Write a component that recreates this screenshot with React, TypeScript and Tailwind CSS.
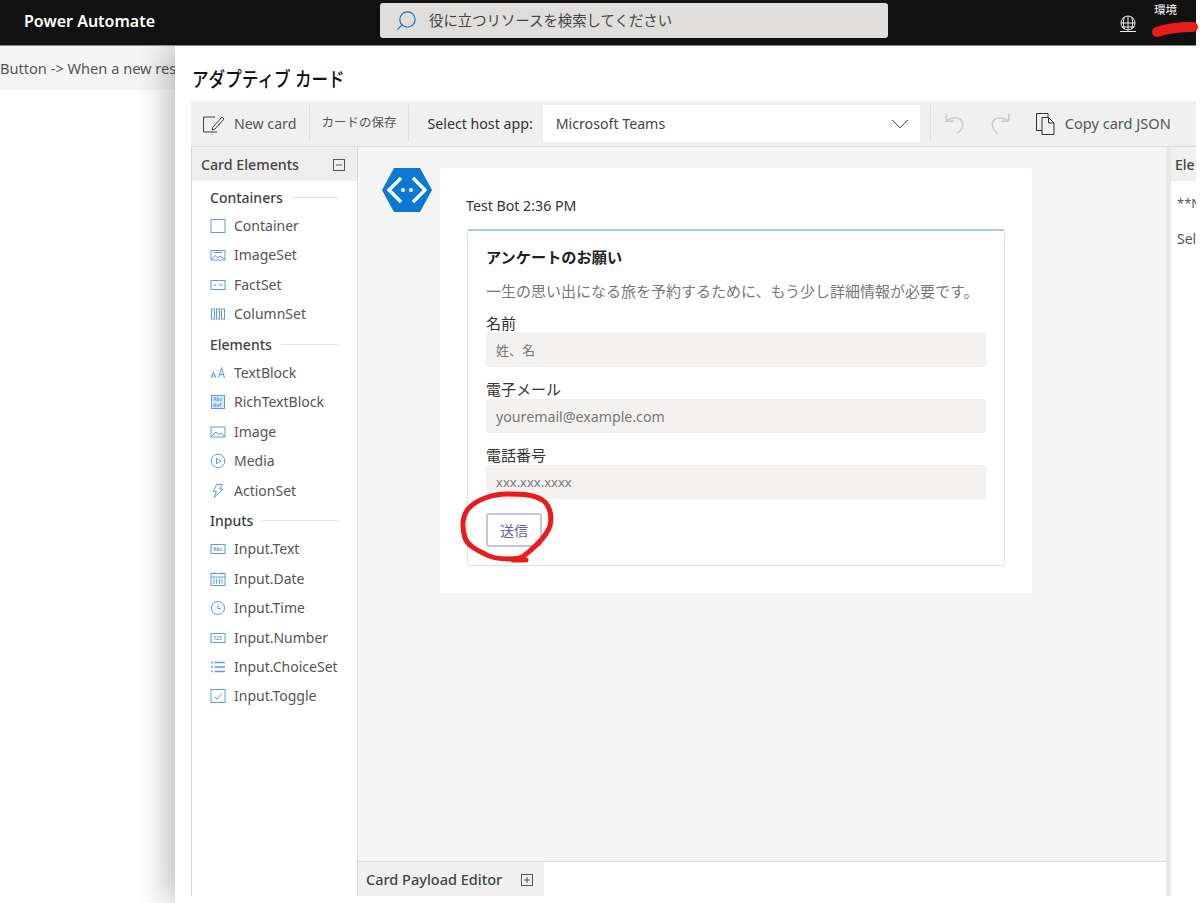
import { ReactNode } from "react"
import { ChevronDown, Search } from "lucide-react"

const sans = "font-['Noto_Sans','Noto_Sans_CJK_JP',sans-serif]"

function Ico({ children }: { children: ReactNode }) {
  return (
    <svg viewBox="0 0 16 16" fill="none" stroke="#5b9be6" strokeWidth="1" className="h-4 w-4 shrink-0">
      {children}
    </svg>
  )
}

function Tiny({ x, y, size = 5, children }: { x: number; y: number; size?: number; children: string }) {
  return (
    <text x={x} y={y} fontSize={size} fontWeight="700" fill="#5b9be6" stroke="none">
      {children}
    </text>
  )
}

const icons: Record<string, ReactNode> = {
  Container: <rect x="1" y="1.5" width="14" height="13" />,
  ImageSet: (
    <>
      <path d="M1 3.5h14v9.5H1z" />
      <path d="M2 12l3-3.5 3 2.5 2-2 4.5 3M3.5 5.5h9" />
    </>
  ),
  FactSet: (
    <>
      <rect x="1" y="3.5" width="14" height="9" />
      <path d="M3.5 8h3M9 8h3.5" />
    </>
  ),
  ColumnSet: (
    <>
      <rect x="1.5" y="3" width="3" height="10" />
      <rect x="6.5" y="3" width="3" height="10" />
      <rect x="11.5" y="3" width="3" height="10" />
    </>
  ),
  TextBlock: <path d="M1 13l2.5-6L6 13M2 11h3M8.5 13l3-10.5 3 10.5M9.8 9.5h3.4" />,
  RichTextBlock: (
    <>
      <rect x="1.5" y="1.5" width="13" height="13" fill="#dbe9fa" />
      <Tiny x={3} y={7}>Abc</Tiny>
      <Tiny x={3} y={13}>def</Tiny>
    </>
  ),
  Image: (
    <>
      <rect x="1" y="3" width="14" height="10" />
      <path d="M2 12l4-4 3 2.5 2-1.5 3.5 3" />
    </>
  ),
  Media: (
    <>
      <circle cx="8" cy="8" r="6.8" />
      <path d="M6.5 5.2v5.6L11 8z" />
    </>
  ),
  ActionSet: <path d="M6.5 1.5h6L9.5 6H13L4 14.5 6.5 8.5H3.5z" />,
  "Input.Text": (
    <>
      <rect x="1" y="3.5" width="14" height="9" />
      <Tiny x={3} y={10}>Abc</Tiny>
    </>
  ),
  "Input.Date": (
    <>
      <rect x="1" y="2.5" width="14" height="12" />
      <path d="M1 6h14M4 1v2.5M12 1v2.5M4 7.5v5.5M6.7 7.5v5.5M9.4 7.5v5.5M12 7.5v5.5" />
    </>
  ),
  "Input.Time": (
    <>
      <circle cx="8" cy="8" r="6.5" />
      <path d="M8 4.5V8.5h3" />
    </>
  ),
  "Input.Number": (
    <>
      <rect x="1" y="3.5" width="14" height="9" />
      <Tiny x={3.2} y={10}>123</Tiny>
    </>
  ),
  "Input.ChoiceSet": <path d="M1 3.5h2M1 8h2M1 12.5h2M4.5 3.5H15M4.5 8H15M4.5 12.5H15" strokeWidth="1.3" />,
  "Input.Toggle": (
    <>
      <rect x="1" y="1.5" width="14" height="13" />
      <path d="M4.5 8.5l2.5 2.5 5-5.5" />
    </>
  ),
}

function SectionHead({ label }: { label: string }) {
  return (
    <div className="flex h-[29.4px] items-center gap-[9px] pl-[18px] pr-[19px] pt-[2px]">
      <span className="text-[14px] font-medium text-[#3f3f3f]">{label}</span>
      <div className="h-px flex-1 bg-[#e3e3e3]" />
    </div>
  )
}

function Row({ label }: { label: string }) {
  return (
    <div className="flex h-[29.4px] items-center gap-2 pl-[18px] text-[14px] text-[#555]">
      <Ico>{icons[label]}</Ico>
      <span className="pb-px">{label}</span>
    </div>
  )
}

function Field({
  label,
  placeholder,
  size,
  top,
}: {
  label: string
  placeholder: string
  size: string
  top: string
}) {
  return (
    <div className={top}>
      <div className="text-[15px] leading-[20px] text-[#333]">{label}</div>
      <div className={`flex h-[34px] items-center rounded-[3px] bg-[#f3f2f1] pl-[10px] pt-px text-[#777] ${size}`}>
        {placeholder}
      </div>
    </div>
  )
}

function BoxGlyph({ plus }: { plus?: boolean }) {
  return (
    <svg viewBox="0 0 12 12" fill="none" stroke="#555" className="h-3 w-3">
      <rect x="0.5" y="0.5" width="11" height="11" />
      <path d={plus ? "M3 6h6M6 3v6" : "M3 6h6"} />
    </svg>
  )
}

const Divider = () => <div className="h-[37px] w-px bg-[#dcdcdc]" />

export default function App() {
  return (
    <div className={`relative flex h-[903px] w-[1200px] flex-col overflow-hidden bg-white ${sans}`}>
      {/* Top bar */}
      <header className="relative z-20 flex h-[46px] w-[1196px] shrink-0 items-center border-b border-[#888] bg-[#111] pb-[4px]">
        <div className="w-[380px] pl-6 text-[16px] font-semibold text-white">Power Automate</div>
        <div className="flex h-[35px] w-[508px] items-center gap-[11px] rounded-[3px] bg-[#dfdedc] pl-[15px] text-[14.4px] text-[#444]">
          <Search size={23} strokeWidth={1.2} className="-scale-x-100 text-[#1c6cb5]" />
          役に立つリソースを検索してください
        </div>
        <svg viewBox="0 0 20 20" fill="none" stroke="#eee" className="ml-[230px] mt-[6px] h-5 w-5">
          <circle cx="10" cy="9" r="7" />
          <path d="M3 9h14M10 2v14M6.5 3c-1.5 4-1.5 8 0 12M13.5 3c1.5 4 1.5 8 0 12M3.5 13h13M2 17.5h16" />
        </svg>
        <div className="ml-[16px] flex-1 self-start pt-px text-[11.5px] leading-[18px] text-white">環境</div>
      </header>

      <div className="flex min-h-0 flex-1">
        {/* Page behind the panel */}
        <div className="w-[175px] shrink-0 overflow-hidden">
          <div className="flex h-[44px] items-center whitespace-nowrap bg-[#f5f5f5] pt-[2px] text-[14.6px] text-[#555]">
            Button -&gt; When a new res
          </div>
        </div>

        {/* Adaptive card designer */}
        <div className="z-10 flex min-w-0 flex-1 flex-col pl-4 shadow-[-10px_0_28px_rgba(0,0,0,0.24)]">
          <h1 className="flex h-[55px] shrink-0 items-center pl-px pt-[12px] text-[20px] font-medium text-[#111]">
            <span className="inline-block origin-left scale-x-[0.83] whitespace-nowrap">アダプティブ カード</span>
          </h1>

          <div className="flex h-[46px] w-[1005px] shrink-0 items-center border-b border-[#dcdcdc] bg-[#f0f0f0] text-[14.2px] text-[#555]">
            <svg viewBox="0 0 24 20" fill="none" stroke="#444" className="ml-[11px] mr-[8px] h-5 w-6">
              <path d="M13 3H1.5v15H15M17 11v-1M20 3l2 2-9 10-3 1 1-3z" />
            </svg>
            <span className="mr-[13px]">New card</span>
            <Divider />
            <span className="ml-[11px] mr-[12px] text-[12.5px]">カードの保存</span>
            <Divider />
            <span className="ml-[18px] text-[#333]">Select host app:</span>
            <div className="ml-[10px] flex h-[37px] w-[377px] items-center justify-between bg-white pl-[13px] pr-[5px] text-[#444]">
              Microsoft Teams
              <ChevronDown size={30} strokeWidth={0.8} className="text-[#333]" />
            </div>
            <div className="ml-[10px]">
              <Divider />
            </div>
            <svg viewBox="0 0 20 22" fill="none" stroke="#c9c9c9" strokeWidth="1.3" className="ml-[13px] h-[25px] w-[22px]">
              <path d="M2 2v7h7M2 9c4-4 15-5 15 3 0 3-2 6-5 8" />
            </svg>
            <svg viewBox="0 0 20 22" fill="none" stroke="#c9c9c9" strokeWidth="1.3" className="ml-[23px] h-[25px] w-[22px]">
              <path d="M18 2v7h-7M18 9c-4-4-15-5-15 3 0 3 2 6 5 8" />
            </svg>
            <svg viewBox="0 0 20 24" fill="none" stroke="#333" className="ml-[24px] h-6 w-5">
              <path d="M13 5V1.5H1.5v17H7M7 5.5h6.5L19 11v11.5H7zM13.5 5.5V11H19" />
            </svg>
            <span className="ml-[10px] whitespace-nowrap text-[14.6px]">Copy card JSON</span>
          </div>

          <div className="flex min-h-0 w-[1005px] flex-1 pb-[7px]">
            {/* Card elements sidebar */}
            <aside className="w-[167px] shrink-0 border-x border-[#d8d8d8]">
              <div className="flex h-[34px] items-center justify-between bg-[#eee] pl-[9px] pr-[12px] pt-[2px] text-[14.2px] font-medium text-[#444]">
                Card Elements
                <BoxGlyph />
              </div>
              <div className="pt-px">
                <SectionHead label="Containers" />
                {["Container", "ImageSet", "FactSet", "ColumnSet"].map((l) => (
                  <Row key={l} label={l} />
                ))}
                <SectionHead label="Elements" />
                {["TextBlock", "RichTextBlock", "Image", "Media", "ActionSet"].map((l) => (
                  <Row key={l} label={l} />
                ))}
                <SectionHead label="Inputs" />
                {["Input.Text", "Input.Date", "Input.Time", "Input.Number", "Input.ChoiceSet", "Input.Toggle"].map((l) => (
                  <Row key={l} label={l} />
                ))}
              </div>
            </aside>

            {/* Preview */}
            <main className="flex min-w-0 flex-1 flex-col">
              <div className="flex min-h-0 flex-1 gap-2 bg-[#f5f5f5] pl-6 pt-[21px]">
                <svg viewBox="0 0 50 44" className="h-[44px] w-[50px] shrink-0">
                  <path d="M12 0h26l12 22-12 22H12L0 22z" fill="#0b78d4" />
                  <path d="M19 10L7 22l12 12M31 10l12 12-12 12" fill="none" stroke="#fff" strokeWidth="3.4" />
                  <circle cx="21" cy="22" r="2" fill="#fff" />
                  <circle cx="29" cy="22" r="2" fill="#fff" />
                </svg>
                <div className="h-[425px] w-[592px] rounded-[4px] bg-white pl-[27px] pr-[27px] pt-[28px]">
                  <div className="-ml-px h-[33px] text-[14.2px] leading-[20px] text-[#333]">Test Bot 2:36 PM</div>
                  <div className="h-[337px] rounded-[3px] border border-t-2 border-[#e2e2e2] border-t-[#a8cbf0] px-[18px] pt-[16px]">
                    <div className="text-[15.2px] font-bold leading-[20px] text-[#222]">アンケートのお願い</div>
                    <div className="mt-[14px] whitespace-nowrap text-[15px] leading-[20px] text-[#777]">
                      一生の思い出になる旅を予約するために、もう少し詳細情報が必要です。
                    </div>
                    <Field label="名前" placeholder="姓、名" size="text-[13px]" top="mt-[12px]" />
                    <Field label="電子メール" placeholder="youremail@example.com" size="text-[14.2px]" top="mt-[12px]" />
                    <Field label="電話番号" placeholder="xxx.xxx.xxxx" size="text-[13px]" top="mt-[12px]" />
                    <div className="mt-[14px] flex h-[34px] w-[56px] items-center justify-center rounded-[3px] border-2 border-[#c3c6e2] text-[14px] text-[#6264a7]">
                      送信
                    </div>
                  </div>
                </div>
              </div>
              <div className="h-[35px] shrink-0 border-t border-[#dcdcdc]">
                <div className="flex h-full w-[186px] items-center justify-between bg-[#f0f0f0] pl-2 pr-[11px] pt-px text-[14.5px] font-medium text-[#444]">
                  Card Payload Editor
                  <BoxGlyph plus />
                </div>
              </div>
            </main>

            {/* Element properties, cut off by the window */}
            <aside className="w-[30px] shrink-0 overflow-hidden border-l-[5px] border-[#e8e8e8]">
              <div className="flex h-[34px] items-center bg-[#f0f0f0] pl-[4px] text-[14px] font-medium text-[#444]">Ele</div>
              <div className="pl-[6px] pt-[12px] text-[13px] leading-[20px] text-[#555]">**N</div>
              <div className="pl-[6px] pt-[16px] text-[14px] leading-[20px] text-[#555]">Sel</div>
            </aside>
          </div>
        </div>
      </div>

      {/* Red marker scribbles drawn on top of the screenshot */}
      <svg viewBox="0 0 1200 903" fill="none" className="pointer-events-none absolute inset-0 z-30 h-[903px] w-[1200px]">
        <path
          d="M507 494c-14 0-30 5-39 15-6 8-6 19-3 29 3 8 12 12 20 16 6 4 14 5 24 5 5 0 11 0 15-3 8-7 21-17 26-30 2-9 1-17-5-24-9-8-24-8-38-8M513 560h13"
          stroke="#e81c1c"
          strokeWidth="5"
          strokeLinecap="round"
        />
        <path d="M1157 32c8-3 22-5 36-5" stroke="#e81c1c" strokeWidth="10" strokeLinecap="round" />
      </svg>
    </div>
  )
}
